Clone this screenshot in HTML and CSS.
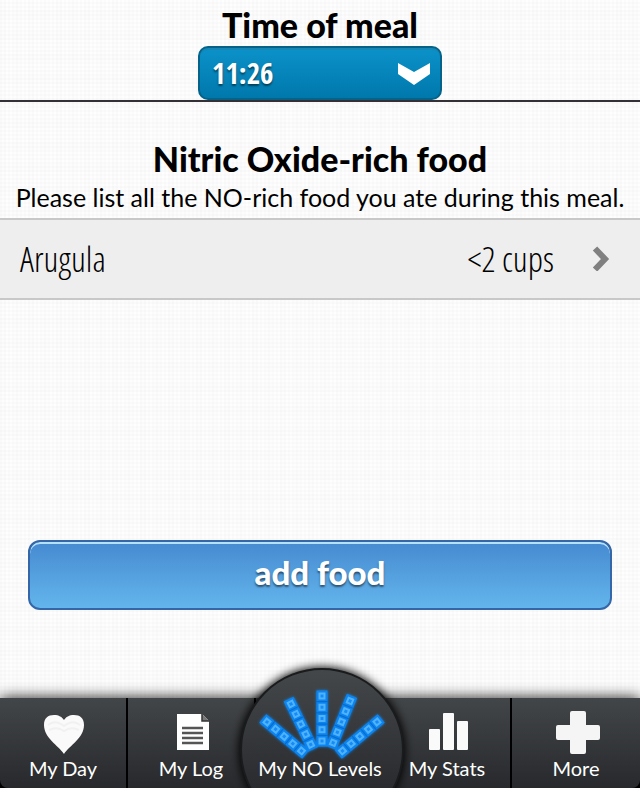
FILE: index.html
```html
<!DOCTYPE html>
<html lang="en">
<head>
<meta charset="utf-8">
<meta name="viewport" content="width=device-width, initial-scale=1">
<title>Meal</title>
<link rel="stylesheet" href="styles.css">
</head>
<body>
<header class="meal-time">
  <label class="heading" for="time">Time of meal</label>
  <div class="picker">
    <select id="time" class="picker-select">
      <option>11:26</option>
    </select>
    <svg class="picker-arrow" viewBox="0 0 32 22" aria-hidden="true"><path d="M0 0 16 9 32 0V11L16 22 0 11Z" fill="#fff"/></svg>
  </div>
</header>
<main class="content">
  <h1 class="heading">Nitric Oxide-rich food</h1>
  <p class="hint">Please list all the NO-rich food you ate during this meal.</p>
  <ul class="foods">
    <li>
      <a class="food" href="#arugula">
        <span class="food-name">Arugula</span>
        <span class="food-amount">&lt;2 cups</span>
        <svg class="food-arrow" viewBox="0 0 18 26" aria-hidden="true"><path d="M3 3.500 13 14 3 24.500" fill="none" stroke="#808080" stroke-width="6"/></svg>
      </a>
    </li>
  </ul>
  <button class="add" type="button">add food</button>
</main>
<nav class="tabs">
  <a class="tab" href="#day">
    <svg class="tab-icon" viewBox="0 0 44 44" aria-hidden="true"><path d="M23 42C17 33 3 26 3 13 3 6 7 3 13 3 18 3 21 5 23 8 25 5 28 3 33 3 39 3 43 6 43 13 43 26 29 33 23 42Z" fill="#fafafa"/><path d="M7 13Q14 7 23 14 32 7 39 13M8 18Q16 14 23 19 30 14 38 18" fill="none" stroke="#f1f1f1" stroke-width="2"/></svg>
    <span class="tab-label">My Day</span>
  </a>
  <a class="tab" href="#log">
    <svg class="tab-icon" viewBox="0 0 44 44" aria-hidden="true"><path d="M8 2H33L40 9V38H8Z" fill="#fff"/><path d="M33 2V9H40" fill="#777" stroke="#333" stroke-width="1.500"/><path d="M13 16H34M13 21H34M13 26H34M13 31H34" stroke="#555" stroke-width="2.500"/></svg>
    <span class="tab-label">My Log</span>
  </a>
  <a class="tab tab-current" href="#levels" aria-current="page">
    <svg class="dome" viewBox="0 0 200 136" aria-hidden="true">
      <defs>
        <linearGradient id="dome-fill" x1="0" y1="16" x2="0" y2="136" gradientUnits="userSpaceOnUse"><stop offset="0" stop-color="#45484a"/><stop offset="1" stop-color="#292b2e"/></linearGradient>
        <filter id="soft" x="-20%" y="-20%" width="140%" height="140%"><feGaussianBlur stdDeviation="5"/></filter>
        <filter id="glow" x="-20%" y="-20%" width="140%" height="140%"><feGaussianBlur stdDeviation="1.500"/></filter>
        <g id="strip">
          <rect x="-5.500" y="-5.500" width="11" height="56" fill="#0a84f0"/>
          <g fill="#168cf5" stroke="#4fb2ff" stroke-width="2">
            <rect x="-2.500" y="-2.500" width="5" height="5"/><rect x="-2.500" y="8.700" width="5" height="5"/><rect x="-2.500" y="20" width="5" height="5"/><rect x="-2.500" y="31.200" width="5" height="5"/><rect x="-2.500" y="42.500" width="5" height="5"/>
          </g>
          <path d="M-6 5.600H6M-6 16.900H6M-6 28.100H6M-6 39.400H6" stroke="#0869c8" stroke-width="1"/>
        </g>
        <g id="fan">
          <use href="#strip" transform="translate(47 70) rotate(-50)"/>
          <use href="#strip" transform="translate(71 52) rotate(-26)"/>
          <use href="#strip" transform="translate(102 44)"/>
          <use href="#strip" transform="translate(130 49) rotate(22)"/>
          <use href="#strip" transform="translate(157 70) rotate(50)"/>
        </g>
      </defs>
      <circle cx="102" cy="98" r="83" fill="#000" filter="url(#soft)"/>
      <circle cx="102" cy="98" r="81" fill="url(#dome-fill)" stroke="#191b1d" stroke-width="2"/>
      <use href="#fan" filter="url(#glow)"/>
      <use href="#fan"/>
    </svg>
    <span class="tab-label">My NO Levels</span>
  </a>
  <a class="tab" href="#stats">
    <svg class="tab-icon" viewBox="0 0 44 44" aria-hidden="true"><g fill="#fafafa"><rect x="4" y="17" width="11" height="21" rx="1"/><rect x="18" y="1" width="11" height="37" rx="1"/><rect x="32" y="9" width="11" height="29" rx="1"/></g></svg>
    <span class="tab-label">My Stats</span>
  </a>
  <a class="tab" href="#more">
    <svg class="tab-icon" viewBox="0 0 44 44" aria-hidden="true"><path d="M18-1H30Q32-1 32 1V13H44Q46 13 46 15V26Q46 28 44 28H32V40Q32 42 30 42H18Q16 42 16 40V28H4Q2 28 2 26V15Q2 13 4 13H16V1Q16-1 18-1Z" fill="#f5f5f5"/></svg>
    <span class="tab-label">More</span>
  </a>
</nav>
</body>
</html>
```
FILE: styles.css
```css
* {
  box-sizing: border-box;
}

body {
  margin: 0;
  min-height: 100vh;
  display: flex;
  flex-direction: column;
  color: #000;
  font-family: Lato, "Liberation Sans", sans-serif;
  background-color: #fefefe;
  background-image:
    repeating-linear-gradient(90deg, rgba(0, 0, 0, 0.01) 0 2px, transparent 2px 4px),
    repeating-linear-gradient(0deg, rgba(0, 0, 0, 0.01) 0 2px, transparent 2px 4px),
    repeating-linear-gradient(90deg, rgba(0, 0, 0, 0.005) 0 6px, transparent 6px 14px),
    repeating-linear-gradient(0deg, rgba(0, 0, 0, 0.005) 0 8px, transparent 8px 22px);
}

.meal-time {
  display: flex;
  flex-direction: column;
  align-items: center;
  padding-top: 6px;
  border-bottom: 2px solid #333136;
}

.heading {
  margin: 0;
  padding-bottom: 2px;
  font-family: "Lato Black", Lato, sans-serif;
  font-size: 34px;
  line-height: 38px;
  font-weight: 900;
  text-align: center;
}

.picker {
  position: relative;
  width: 244px;
}

.picker-select {
  appearance: none;
  display: block;
  width: 100%;
  height: 54px;
  padding: 0 56px 2px 12px;
  border: 2px solid #05638a;
  border-radius: 10px;
  background: linear-gradient(#0b92c9, #0078ac);
  box-shadow: inset 0 2px 0 #1686b5;
  color: #fff;
  font-family: "Open Sans Condensed", "Liberation Sans Narrow", sans-serif;
  font-size: 29px;
  font-weight: 700;
  text-shadow: 0 2px 2px rgba(0, 0, 0, 0.5);
}

.picker-arrow {
  position: absolute;
  top: 17px;
  right: 12px;
  width: 32px;
  height: 22px;
  pointer-events: none;
}

.content {
  flex: 1;
  display: flex;
  flex-direction: column;
  padding-top: 38px;
}

.hint {
  margin: 0;
  padding-bottom: 4px;
  font-size: 25px;
  line-height: 34px;
  text-align: center;
}

.foods {
  margin: 0;
  padding: 0;
  list-style: none;
}

.food {
  display: flex;
  align-items: center;
  height: 82px;
  padding: 0 30px 2px 20px;
  border: solid #c8c8c8;
  border-width: 2px 0;
  background: #eee;
  color: #000;
  font-family: "Open Sans Condensed Light", "Open Sans Condensed", "Liberation Sans Narrow", sans-serif;
  font-size: 35px;
  font-weight: 300;
  text-decoration: none;
}

.food-name {
  flex: 1;
}

.food-arrow {
  width: 18px;
  height: 26px;
  margin-left: 38px;
}

.add {
  height: 70px;
  margin: 240px 28px 88px;
  padding: 0 0 6px;
  border: 2px solid #3567a8;
  border-radius: 12px;
  background: linear-gradient(#468ad0, #63b5ed);
  box-shadow: inset 0 2px 0 #b4e0fb;
  color: #fff;
  font-family: "Lato Black", Lato, sans-serif;
  font-size: 33px;
  font-weight: 900;
  text-shadow: 0 2px 2px rgba(0, 0, 0, 0.5);
}

.tabs {
  position: relative;
  display: grid;
  grid-template-columns: repeat(5, 1fr);
  height: 90px;
  background: #000;
  box-shadow: 0 0 14px rgba(0, 0, 0, 0.9);
}

.tab {
  display: flex;
  flex-direction: column;
  align-items: center;
  justify-content: flex-end;
  padding-bottom: 8px;
  border-right: 2px solid #000;
  background: linear-gradient(#434648, #27292c);
  color: #fff;
  text-decoration: none;
}

.tab:first-child {
  border-bottom-left-radius: 8px;
}

.tab:last-child {
  border-right: 0;
  border-bottom-right-radius: 8px;
}

.tab-current {
  position: relative;
  border-right: 0;
}

.tab-icon {
  width: 44px;
  height: 44px;
  overflow: visible;
}

.tab-label {
  position: relative;
  font-size: 20px;
  line-height: 24px;
  white-space: nowrap;
}

.dome {
  position: absolute;
  bottom: 0;
  left: 50%;
  width: 200px;
  height: 136px;
  margin-left: -100px;
}
```
